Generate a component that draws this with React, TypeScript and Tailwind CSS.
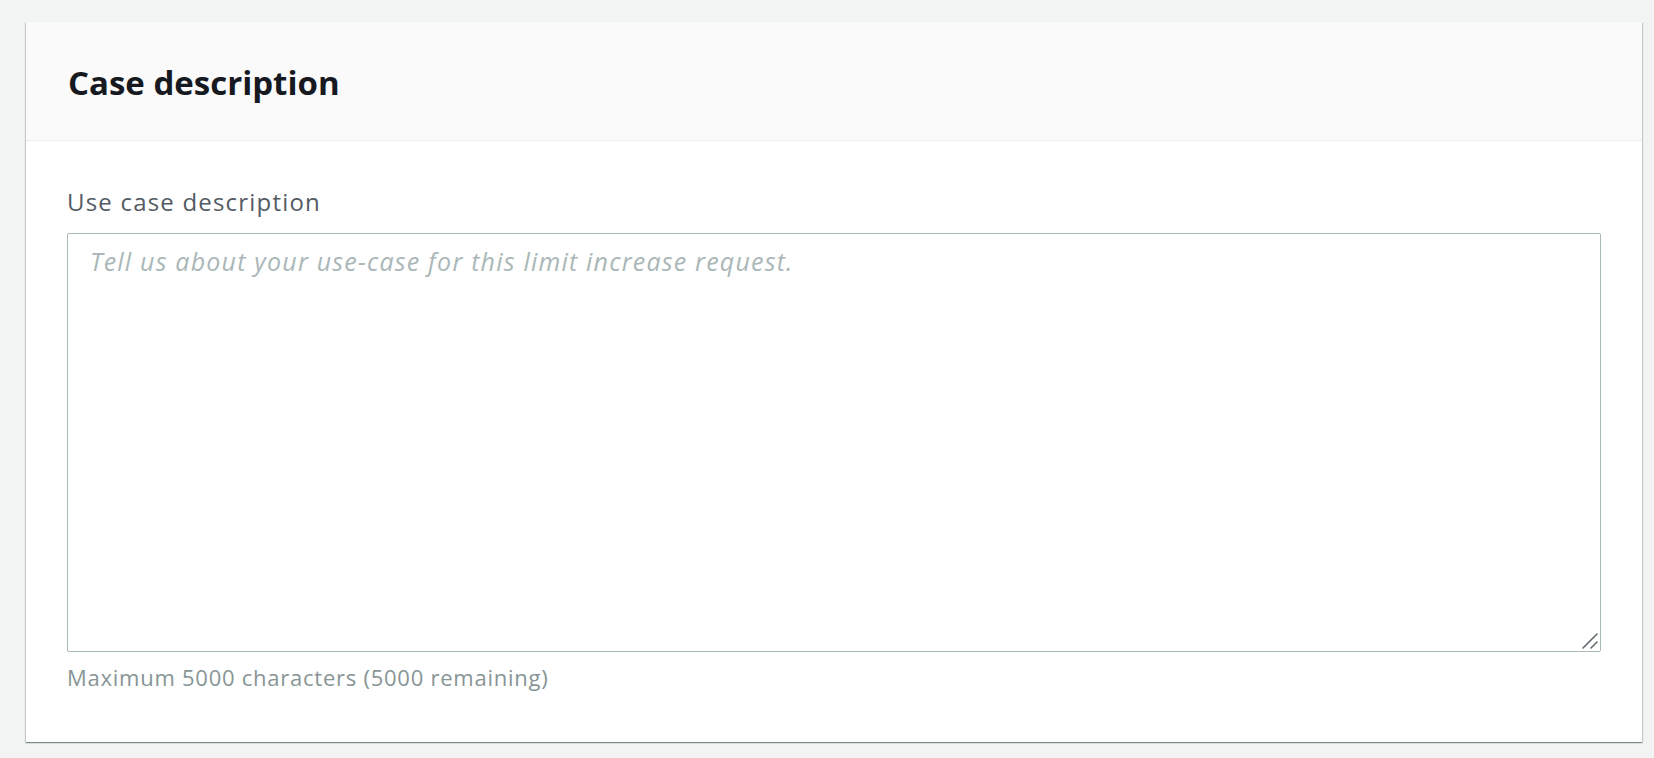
export default function App() {
  return (
    <div
      className="min-h-screen bg-[#f2f3f3] pt-[22px] pl-[26px] pr-[12px] pb-[16px]"
      style={{ fontFamily: '"Open Sans", "Noto Sans", sans-serif' }}
    >
      <div className="bg-white shadow-[0_1px_1px_0_rgba(0,28,36,0.3),1px_1px_1px_0_rgba(0,28,36,0.15),-1px_1px_1px_0_rgba(0,28,36,0.15)]">
        {/* Header */}
        <div className="h-[119px] bg-[#fafafa] border-b border-[#eaeded] pl-[42px] pt-[41px]">
          <h2 className="text-[33px] leading-[40px] font-bold text-[#16191f]">Case description</h2>
        </div>

        {/* Body */}
        <div className="px-[41px] pt-[46px] pb-[50px]">
          <label
            htmlFor="use-case"
            className="block text-[24px] leading-[30px] tracking-[1.2px] text-[#545b64]"
          >
            Use case description
          </label>
          <div className="relative mt-[16px]">
            <textarea
              id="use-case"
              placeholder="Tell us about your use-case for this limit increase request."
              className="block w-full h-[419px] resize-none border border-[#aab7b8] rounded-[2px] bg-white px-[22px] pt-[12px] text-[25px] leading-[30px] tracking-[1.2px] text-[#16191f] placeholder:italic placeholder:text-[#aab7b8] outline-none"
            />
            {/* resize grip */}
            <svg
              className="absolute right-[3px] bottom-[3px] pointer-events-none"
              width="16"
              height="16"
              viewBox="0 0 16 16"
            >
              <path d="M1 15 L15 1" stroke="#5f6b6c" strokeWidth="1.6" strokeLinecap="round" />
              <path d="M9 15 L15 9" stroke="#5f6b6c" strokeWidth="1.6" strokeLinecap="round" />
            </svg>
          </div>
          <p className="mt-[10px] text-[22px] leading-[30px] tracking-[0.75px] text-[#879596]">
            Maximum 5000 characters (5000 remaining)
          </p>
        </div>
      </div>
    </div>
  );
}
